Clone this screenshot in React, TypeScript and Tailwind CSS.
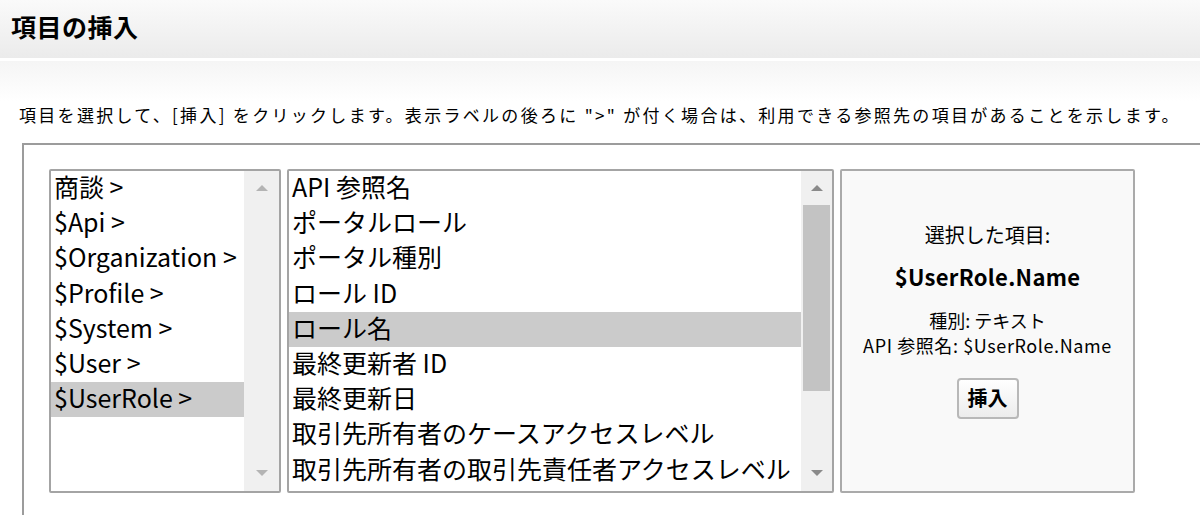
import * as React from "react"

const fieldGroups = [
  "商談 >",
  "$Api >",
  "$Organization >",
  "$Profile >",
  "$System >",
  "$User >",
  "$UserRole >",
]

const fields = [
  "API 参照名",
  "ポータルロール",
  "ポータル種別",
  "ロール ID",
  "ロール名",
  "最終更新者 ID",
  "最終更新日",
  "取引先所有者のケースアクセスレベル",
  "取引先所有者の取引先責任者アクセスレベル",
]

function Arrow({ up, light }: { up?: boolean; light?: boolean }) {
  return (
    <svg width="14" height="8" viewBox="0 0 14 8" className="block">
      <polygon
        points={up ? "7,1 13,7 1,7" : "1,1 13,1 7,7"}
        fill={light ? "#b4b4b4" : "#8a8a8a"}
      />
    </svg>
  )
}

function ListBox({
  items,
  selected,
  thumb,
  className,
  barClassName,
}: {
  items: string[]
  selected: number
  thumb?: boolean
  className?: string
  barClassName?: string
}) {
  return (
    <div
      className={`flex h-[324px] overflow-hidden rounded-[2px] border-2 border-[#a4a4a4] bg-white ${className ?? ""}`}
    >
      <div className="flex min-w-0 flex-1 flex-col">
        {items.map((item, i) => (
          <div
            key={item}
            className={`h-[35.2px] shrink-0 whitespace-nowrap pl-[3px] text-[25px] leading-[31px] text-black ${
              i === selected ? "bg-[#cbcbcb]" : ""
            }`}
          >
            {item}
          </div>
        ))}
      </div>
      <div
        className={`flex shrink-0 flex-col items-center bg-[#f0f0f0] ${barClassName ?? ""}`}
      >
        <div className="flex h-[34px] items-center justify-center">
          <Arrow up light={!thumb} />
        </div>
        <div className="flex w-full flex-1 flex-col px-[2px]">
          {thumb && <div className="h-[186px] w-full bg-[#c3c3c3]" />}
        </div>
        <div className="flex h-[36px] items-center justify-center">
          <Arrow light={!thumb} />
        </div>
      </div>
    </div>
  )
}

export default function App() {
  return (
    <div className="h-[515px] overflow-hidden bg-white font-['Noto_Sans_CJK_JP','Noto_Sans',sans-serif] text-black">
      <div className="flex h-[58px] items-center bg-gradient-to-b from-[#fafafa] to-[#ebebeb] pl-[11px]">
        <h1 className="pb-[4px] text-[25px] font-bold tracking-[0.5px]">
          項目の挿入
        </h1>
      </div>
      <div className="h-[3px] bg-white" />
      <div className="h-[40px] bg-gradient-to-b from-[#f5f5f5] to-white" />

      <p className="pl-[19px] text-[17px] leading-[28px] tracking-[2.3px] whitespace-nowrap">
        項目を選択して、[挿入] をクリックします。表示ラベルの後ろに "&gt;"
        が付く場合は、利用できる参照先の項目があることを示します。
      </p>

      <div className="mt-[14px] ml-[22px] h-[400px] border-t-2 border-l-2 border-[#9c9c9c] pt-[24px] pl-[25px]">
        <div className="flex gap-[6px]">
          <ListBox
            items={fieldGroups}
            selected={6}
            className="w-[232px]"
            barClassName="w-[35px]"
          />
          <ListBox
            items={fields}
            selected={4}
            thumb
            className="w-[547px]"
            barClassName="w-[31px]"
          />

          <div className="flex h-[324px] w-[295px] flex-col items-center rounded-[2px] border-2 border-[#aaaaaa] bg-[#f9f9f9] pt-[50px]">
            <div className="text-[20px] leading-[28px]">選択した項目:</div>
            <div className="mt-[13px] text-[22px] leading-[28px] font-bold tracking-[0.3px]">
              $UserRole.Name
            </div>
            <div className="mt-[18px] text-[18px] leading-[25px]">
              種別: テキスト
            </div>
            <div className="text-[18px] leading-[25px] tracking-[0.6px]">
              API 参照名: $UserRole.Name
            </div>
            <button
              type="button"
              className="mt-[20px] flex h-[41px] w-[62px] items-center justify-center rounded-[4px] border-2 border-[#b8b8b8] bg-gradient-to-b from-white to-[#ececec] pb-[2px] text-[20px] font-bold"
            >
              挿入
            </button>
          </div>
        </div>
      </div>
    </div>
  )
}
